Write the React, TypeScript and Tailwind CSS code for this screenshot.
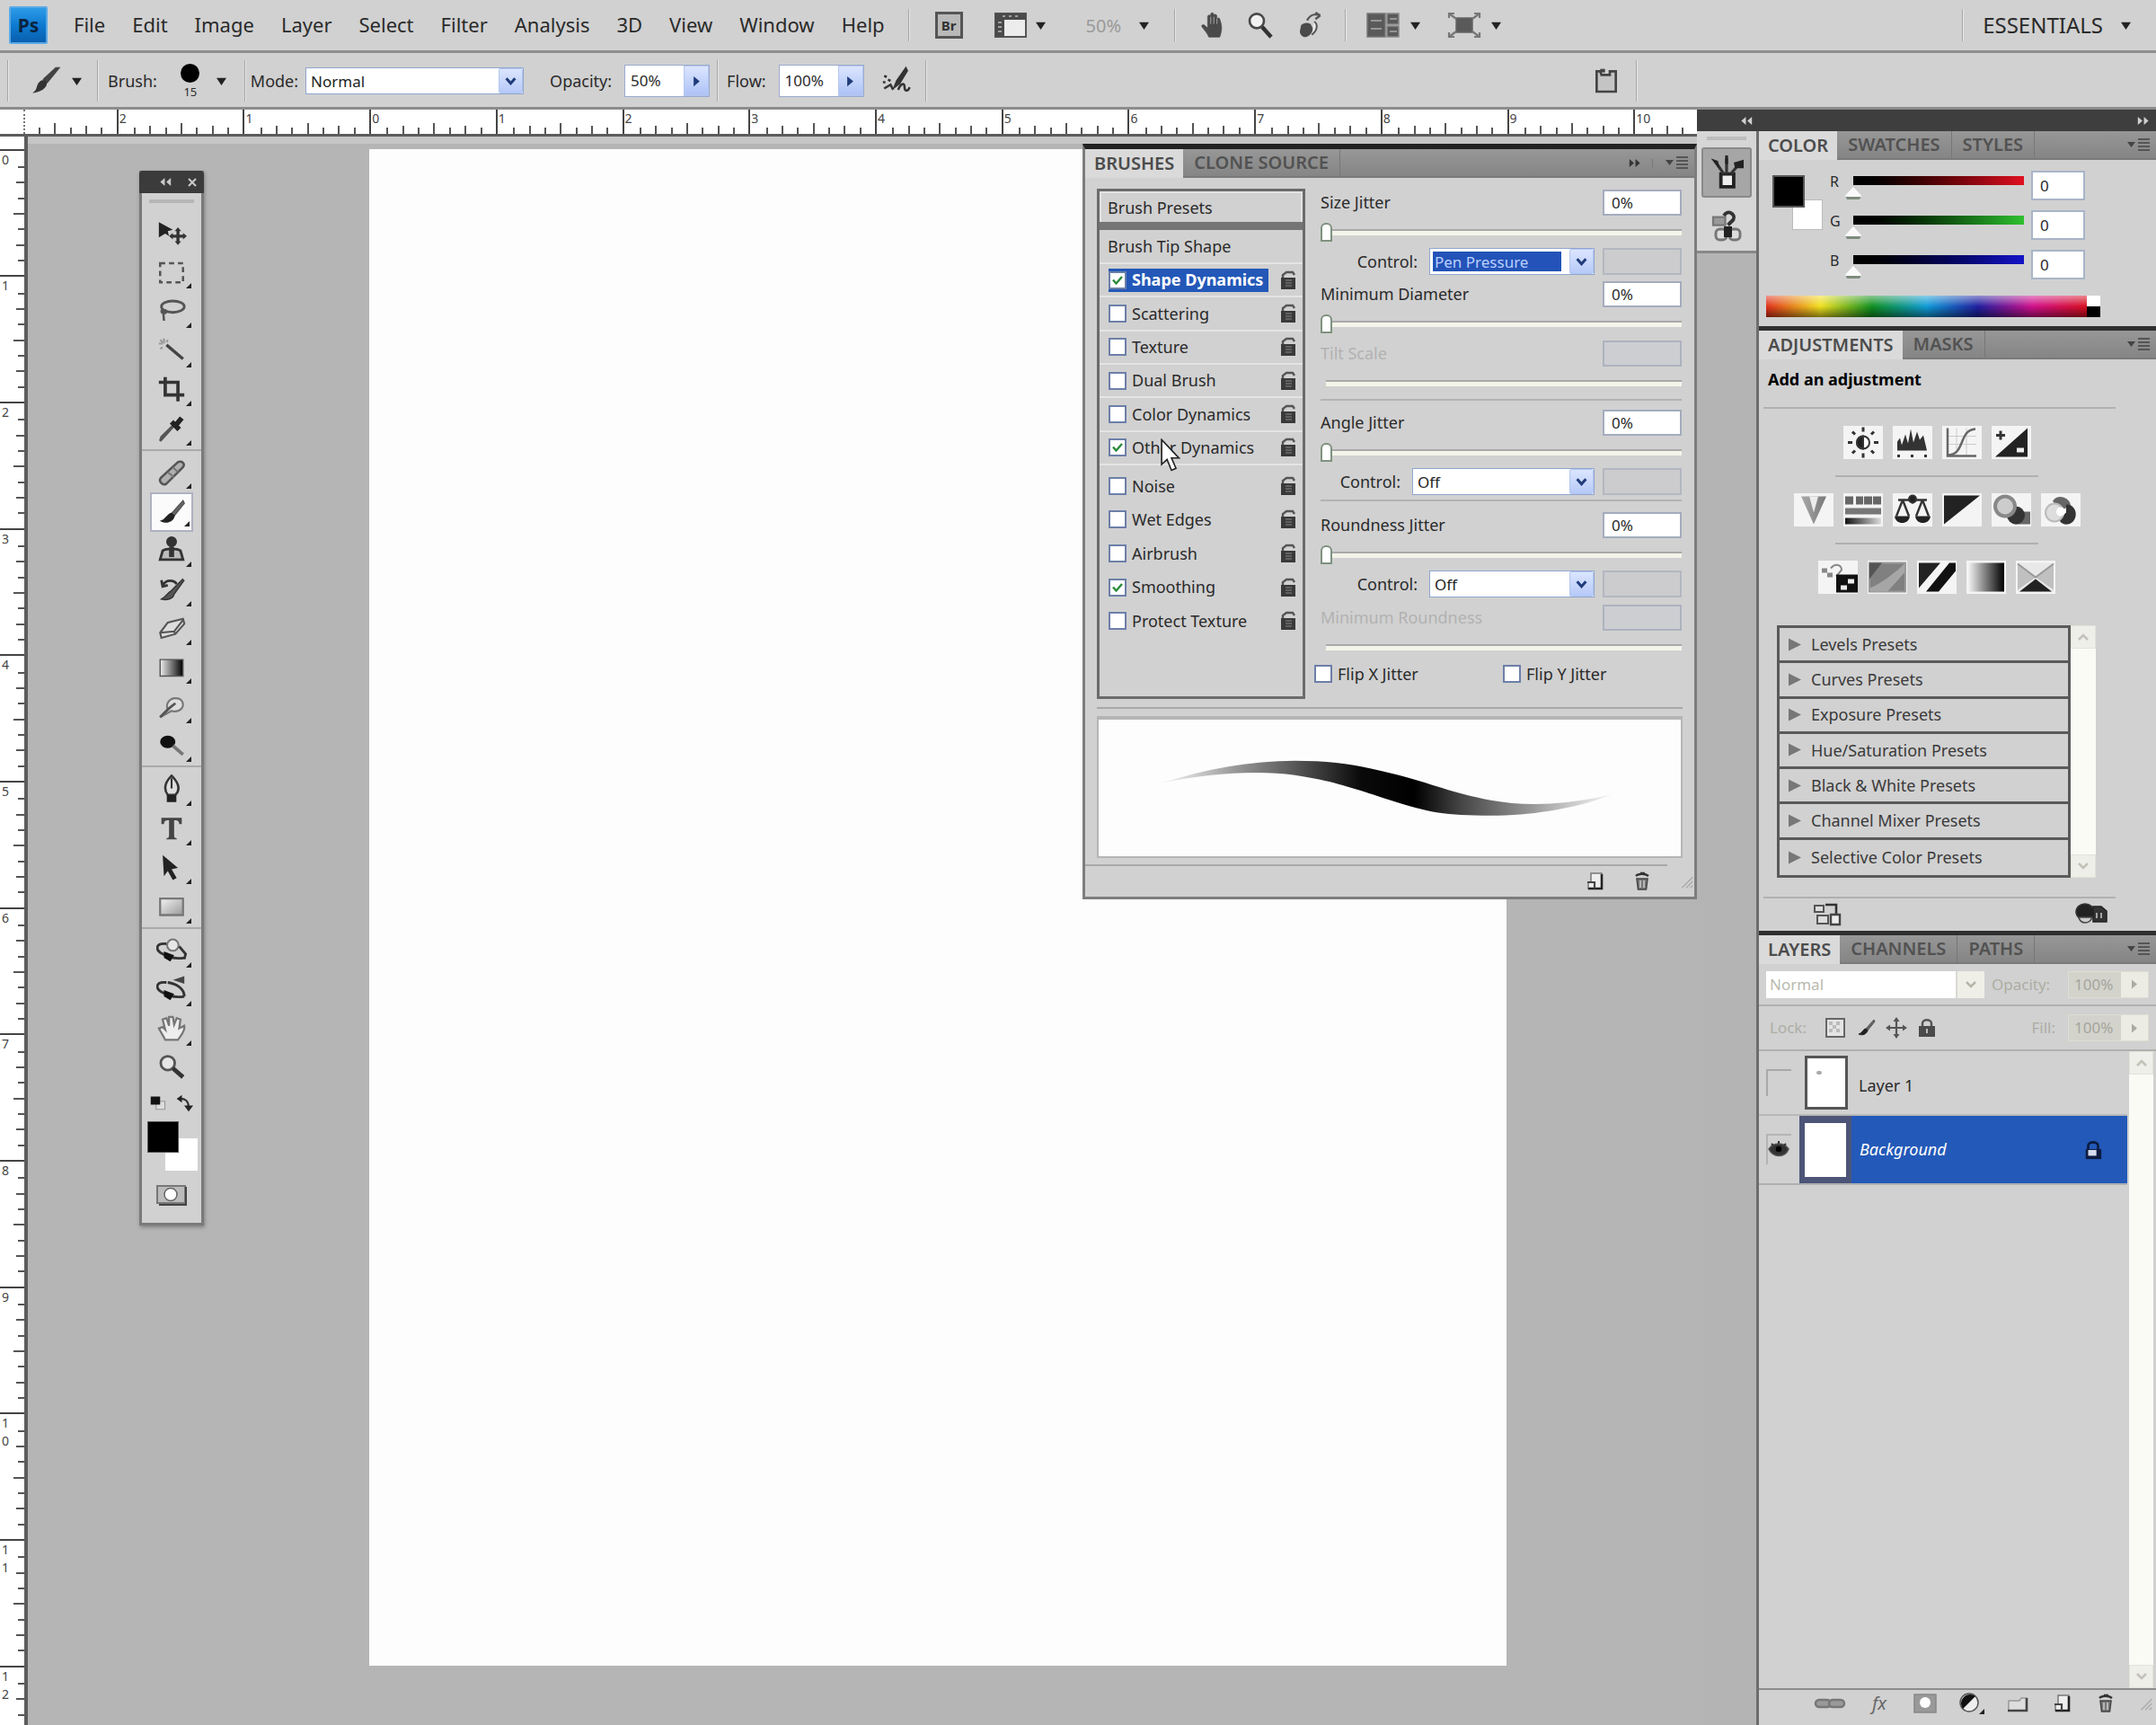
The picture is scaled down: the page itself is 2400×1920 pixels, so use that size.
import React from 'react'

type Kids = { children: React.ReactNode }

const Svg = ({ children, c = 'w-8 h-8', vb = '0 0 24 24' }: Kids & { c?: string; vb?: string }) => (
  <svg viewBox={vb} className={c} fill="none" stroke="#333" strokeWidth="1.5" aria-hidden="true">
    {children}
  </svg>
)

const Caret = ({ c = 'text-[#222]' }: { c?: string }) => (
  <svg viewBox="0 0 10 10" className={`w-[11px] h-[11px] shrink-0 ${c}`} fill="currentColor" aria-hidden="true">
    <path d="M0 1.5h10L5 9z" />
  </svg>
)

/* ---------- menu bar ---------- */

const menus = ['File', 'Edit', 'Image', 'Layer', 'Select', 'Filter', 'Analysis', '3D', 'View', 'Window', 'Help']

const Sep = ({ c = 'h-9' }: { c?: string }) => (
  <span className={`w-[2px] shrink-0 bg-[#a6a6a6] border-r border-[#e8e8e8] ${c}`} />
)

function MenuBar() {
  return (
    <header className="flex h-[59px] shrink-0 items-center border-b-[3px] border-[#8e8e8e] bg-[#d1d1d1] pl-[10px] pr-[28px] text-[22px]">
      <div className="grid h-[42px] w-[43px] place-items-center rounded-[2px] border-2 border-[#5aa9e6] bg-linear-to-b from-[#2c9be8] via-[#0d7ad0] to-[#0a5fae] text-[21px] font-bold text-[#0b2440]">
        Ps
      </div>
      <nav className="ml-[29px] flex gap-[30px]">
        {menus.map((m) => (
          <button key={m}>{m}</button>
        ))}
      </nav>
      <div className="ml-[26px] flex items-center">
        <Sep />
        <button aria-label="Launch Bridge" className="ml-[28px] grid h-[30px] w-[31px] place-items-center border-[3px] border-[#555] bg-[#b9b9b9] text-[15px] font-bold leading-none text-[#333]">
          Br
        </button>
        <button aria-label="View extras" className="ml-[34px] flex items-center gap-[9px]">
          <Svg c="w-[38px] h-[32px]" vb="0 0 38 32">
            <path d="M2 3h34v26H2z" fill="#ececec" stroke="#555" strokeWidth="2" />
            <path d="M2 3h34v7H12v19H2z" fill="#4a4a4a" stroke="none" />
            <path d="M5 13h4M5 18h4M5 23h4M10 6h3M17 6h3M24 6h3" stroke="#bbb" />
          </Svg>
          <Caret />
        </button>
        <button aria-label="Zoom level" className="ml-[45px] flex items-center gap-[20px] text-[20px] text-[#9a9a9a]">
          50%
          <Caret />
        </button>
        <span className="ml-[28px] flex"><Sep /></span>
        <button aria-label="Hand" className="ml-[26px]">
          <Svg c="w-[32px] h-[32px]">
            <path d="M8 22c-1-3-4-6-6-9 0-1.500 1.500-2 3-.5l2 2V5c0-1.800 2.300-1.800 2.500 0V3c.2-1.800 2.400-1.800 2.600 0v1.200c.3-1.600 2.500-1.500 2.600.2V7c.4-1.400 2.400-1.300 2.500.3C19.300 13 19 17 17 22z" fill="#4a4a4a" stroke="#4a4a4a" strokeWidth=".5" />
            <path d="M9.600 5v6M12.200 5v6M14.800 6.500V11" stroke="#aaa" strokeWidth=".7" />
          </Svg>
        </button>
        <button aria-label="Zoom" className="ml-[20px]">
          <Svg c="w-[32px] h-[32px]">
            <circle cx="9" cy="8.500" r="6" fill="#f2f2f2" stroke="#4a4a4a" strokeWidth="2" />
            <path d="M13.500 13.500L21 22" stroke="#333" strokeWidth="3.400" />
          </Svg>
        </button>
        <button aria-label="Rotate view" className="ml-[24px]">
          <Svg c="w-[32px] h-[32px]">
            <path d="M4 12c2-2 5-2.500 8-1l2 4c-1 4-3 6-6 7-3 0-5-2-5-5z" fill="#4a4a4a" stroke="none" />
            <path d="M9 8c2-4 6-6 11-4M20 4l-4-2.500M20 4l-4 3" stroke="#555" strokeWidth="1.800" />
            <path d="M15 9c3 2 3 7-2 11" fill="#eee" stroke="#555" />
          </Svg>
        </button>
        <span className="ml-[22px] flex"><Sep /></span>
        <button aria-label="Arrange documents" className="ml-[22px] flex items-center gap-[11px]">
          <Svg c="w-[38px] h-[32px]" vb="0 0 38 32">
            <path d="M1 3h20v26H1z" fill="#5a5a5a" stroke="#777" />
            <path d="M23 3h13v12H23zM23 17h13v12H23z" fill="#5a5a5a" stroke="#888" />
            <path d="M5 11h12M5 20h12M26 9h8M26 23h8" stroke="#aaa" />
          </Svg>
          <Caret />
        </button>
        <button aria-label="Screen mode" className="ml-[30px] flex items-center gap-[11px]">
          <Svg c="w-[38px] h-[32px]" vb="0 0 38 32">
            <path d="M10 8h18v16H10z" fill="#5a5a5a" stroke="#666" />
            <path d="M2 3l8 6M36 3l-8 6M2 29l8-6M36 29l-8-6M2 8V3h6M30 3h6v5M2 24v5h6M36 24v5h-6" stroke="#777" strokeWidth="2.200" />
          </Svg>
          <Caret />
        </button>
      </div>
      <div className="ml-auto flex items-center">
        <Sep />
        <button className="ml-[21px] flex items-center gap-[20px] text-[24px]">
          ESSENTIALS
          <Caret />
        </button>
      </div>
    </header>
  )
}

/* ---------- shared form controls ---------- */

const Chevron = () => (
  <svg viewBox="0 0 12 10" className="w-[13px] h-[11px]" fill="none" stroke="#1f3b7a" strokeWidth="2.800" aria-hidden="true">
    <path d="M1.500 2L6 7l4.500-5" />
  </svg>
)

function Drop({ id, value, options, c, on }: { id: string; value: string; options: string[]; c: string; on?: boolean }) {
  return (
    <div className={`flex h-[30px] border border-[#8fa5cf] bg-white ${c}`}>
      <div className="grid w-full">
        <select
          id={id}
          defaultValue={value}
          className={`col-start-1 row-start-1 appearance-none text-[17px] leading-none outline-none ${
            on ? 'm-[3px] mr-[36px] bg-[#2353b8] pl-[2px] text-[#bcd0ff]' : 'bg-transparent pl-[5px] text-[#222]'
          }`}
        >
          {options.map((o) => (
            <option key={o}>{o}</option>
          ))}
        </select>
        <span className="pointer-events-none col-start-1 row-start-1 grid h-full w-[27px] place-items-center justify-self-end rounded-[2px] border border-[#b4c6f0] bg-linear-to-b from-[#dbe5ff] to-[#b6c9f7]">
          <Chevron />
        </span>
      </div>
    </div>
  )
}

const PctField = ({ id, value, c }: { id: string; value: string; c: string }) => (
  <div className={`flex h-[36px] items-stretch border border-[#9aaace] bg-white ${c}`}>
    <input id={id} defaultValue={value} className="w-0 min-w-0 flex-1 pl-[6px] text-[17px] outline-none" />
    <button aria-label={`Adjust ${id}`} className="grid w-[28px] place-items-center border border-[#b4c6f0] bg-linear-to-b from-[#dbe5ff] to-[#adc2f5]">
      <svg viewBox="0 0 8 10" className="h-[13px] w-[9px]" fill="#1f3b7a"><path d="M1 0l6 5-6 5z" /></svg>
    </button>
  </div>
)

function OptionsBar() {
  return (
    <section aria-label="Tool options" className="flex h-[63px] shrink-0 items-center border-b-[3px] border-[#8c8c8c] bg-[#d1d1d1] pt-[2px] text-[18px]">
      <Sep c="ml-[8px] h-[46px]" />
      <button aria-label="Brush tool preset" className="ml-[24px] flex items-center gap-[12px]">
        <Svg c="w-[34px] h-[34px]">
          <path d="M22 2L13 13l-2.500-2.200L20 2z" fill="#444" stroke="#444" />
          <path d="M10.500 11.500c2 .5 2.800 2 2 4-1.500 3.500-6 5.500-11 6 3-1.500 3-4 4-6.500 1-2.500 3-4 5-3.500z" fill="#333" stroke="none" />
        </Svg>
        <Caret />
      </button>
      <Sep c="ml-[17px] h-[46px]" />
      <button className="ml-[10px] flex items-center">
        Brush:
        <span className="ml-[22px] flex w-[30px] flex-col items-center gap-[4px]">
          <span className="h-[21px] w-[21px] rounded-full bg-black" />
          <span className="text-[13px] leading-none">15</span>
        </span>
        <span className="ml-[14px] flex"><Caret /></span>
      </button>
      <Sep c="ml-[20px] h-[46px]" />
      <label htmlFor="mode" className="ml-[5px]">Mode:</label>
      <Drop id="mode" value="Normal" options={['Normal', 'Multiply', 'Screen']} c="ml-[8px] w-[243px]" />
      <label htmlFor="Opacity" className="ml-[29px]">Opacity:</label>
      <PctField id="Opacity" value="50%" c="ml-[14px] w-[95px]" />
      <Sep c="ml-[8px] h-[46px]" />
      <label htmlFor="Flow" className="ml-[9px]">Flow:</label>
      <PctField id="Flow" value="100%" c="ml-[14px] w-[95px]" />
      <button aria-label="Airbrush" className="ml-[16px]">
        <Svg c="w-[38px] h-[34px]">
          <path d="M20 2l-7 10-2 5 4-3 6-10z" fill="#333" />
          <path d="M14 19c2-5 5-6 5-2s3 3 4 0M3 8l2 1M2 13h2M6 11l2 1M3 18l5-3 2 4" strokeWidth="1.800" />
        </Svg>
      </button>
      <Sep c="ml-[14px] h-[46px]" />
      <button aria-label="Toggle brushes panel" className="ml-[740px]">
        <Svg c="w-[32px] h-[34px]">
          <path d="M4 4h3l1 3h7V4h5v17H4z" fill="#c4c4c4" stroke="#444" strokeWidth="2" />
          <path d="M7 2h4v3H7z" fill="#444" stroke="none" />
        </Svg>
      </button>
      <Sep c="ml-[17px] h-[46px]" />
    </section>
  )
}

/* ---------- rulers ---------- */

const hNums = ['3', '2', '1', '0', '1', '2', '3', '4', '5', '6', '7', '8', '9', '10']
const vNums = ['1', '0', '1', '2', '3', '4', '5', '6', '7', '8', '9', '10', '11', '12', '13']
const hTicks = ['h-[7px]', 'h-[9px]', 'h-[7px]', 'h-[12px]', 'h-[7px]', 'h-[9px]', 'h-[7px]']
const vTicks = ['w-[7px]', 'w-[9px]', 'w-[7px]', 'w-[12px]', 'w-[7px]', 'w-[9px]', 'w-[7px]']

const HRuler = () => (
  <div className="flex h-[30px] shrink-0 overflow-hidden border-b-[3px] border-[#5c5c5c] bg-white">
    <div className="z-10 w-[28px] shrink-0 border-r-2 border-dotted border-[#777] bg-white" />
    <div className="ml-[-39px] grid w-[1970px] shrink-0 grid-cols-14">
      {hNums.map((n, i) => (
        <div key={i} className="grid grid-cols-8 items-end border-l-2 border-[#444]">
          <span className="self-start pl-px text-[14px] leading-[20px] text-[#444]">{n}</span>
          {hTicks.map((t, j) => (
            <span key={j} className={`border-l-2 border-[#555] ${t}`} />
          ))}
        </div>
      ))}
    </div>
  </div>
)

const VRuler = () => (
  <div className="w-[31px] shrink-0 overflow-hidden border-r-[4px] border-[#5c5c5c] bg-white">
    <div className="h-0">
      <div className="mt-[-127px] grid h-[2110px] grid-rows-15">
        {vNums.map((n, i) => (
          <div key={i} className="grid grid-rows-8 justify-items-end border-t-2 border-[#444]">
            <span className="flex h-0 flex-col items-center justify-self-start pl-[2px] text-[14px] leading-[20px] text-[#444]">
              {n.split('').map((d, k) => (
                <span key={k}>{d}</span>
              ))}
            </span>
            {vTicks.map((t, j) => (
              <span key={j} className={`border-t-2 border-[#555] ${t}`} />
            ))}
          </div>
        ))}
      </div>
    </div>
  </div>
)

/* ---------- toolbox ---------- */

const brushGlyph = (
  <>
    <path d="M21 3L12 13l2 2 8-10z" fill="#666" stroke="#555" strokeWidth="1" />
    <path d="M12 13c-3 0-4 5-8 6 4 2 9 0 10-4z" fill="#222" stroke="#222" strokeWidth="1" />
  </>
)

type Tool = [string, React.ReactNode, boolean?]

const groups: Tool[][] = [
  [
    ['Move', <><path d="M2 3l11 6-4 1 1 4-3-2-5 3z" fill="#222" stroke="none" /><path d="M17 9v10M12 14h10" strokeWidth="2.400" /><path d="M17 7l2.500 3h-5zM17 21l2.500-3h-5zM10 14l3-2.500v5zM24 14l-3-2.500v5z" fill="#333" stroke="none" /></>, false],
    ['Marquee', <path d="M3 5h18v15H3z" strokeDasharray="4 3" strokeWidth="1.800" stroke="#555" />],
    ['Lasso', <><ellipse cx="13" cy="8" rx="9" ry="4.500" stroke="#555" strokeWidth="2" /><path d="M5 10c-2 2 0 4 2 3s0-3-1-2c-1 2 0 5 0 8" strokeWidth="1.800" stroke="#555" /></>],
    ['Magic Wand', <><path d="M8 7l13 11" stroke="#444" strokeWidth="2.400" /><path d="M6 2v4M2 6h3M3 3l2 2M9 3L8 5M3 10l2-1" stroke="#999" /></>],
    ['Crop', <path d="M7 2v14h15M2 6h15v15" stroke="#333" strokeWidth="2.600" />],
    ['Eyedropper', <><path d="M14 9L4 20l-1 1 1-3 10-10" stroke="#555" strokeWidth="1.800" fill="#eee" /><path d="M12 6l6 6M15 9l5-6" stroke="#222" strokeWidth="4" /></>],
  ],
  [
    ['Healing Brush', <><path d="M4 15L17 3c3-1 6 1 4 4L8 20c-3 2-7-2-4-5z" fill="#b0b0b0" stroke="#555" strokeWidth="1.800" /><path d="M9 11l5 4M13 7l4 4" stroke="#777" /></>],
    ['Brush', brushGlyph],
    ['Clone Stamp', <><circle cx="12" cy="5" r="3.500" fill="#333" /><path d="M12 8v5M5 12c3-2 11-2 14 0l2 7H3z" fill="#bbb" strokeWidth="2" /><path d="M10 9h4v8h-4z" fill="#333" stroke="none" /></>],
    ['History Brush', <><path d="M21 3L11 13c-2 1-3 4-7 6 4 1 9 0 10-4l8-11" fill="#555" strokeWidth="1" /><path d="M5 8c3-5 9-4 11-1M4 4l1 5 4-1" strokeWidth="2" /></>],
    ['Eraser', <><path d="M3 15l6-8 12-3 1 4-7 8-11 3z" fill="#ddd" stroke="#555" /><path d="M3 15l11-1 7-9M14 14l1 2" stroke="#555" /></>],
    ['Gradient', <><defs><linearGradient id="tg"><stop offset="0" stopColor="#eee" /><stop offset="1" stopColor="#000" /></linearGradient></defs><path d="M3 5h18v13H3z" fill="url(#tg)" stroke="#555" strokeWidth="1" /></>],
    ['Smudge', <><path d="M3 20l6-6c-2-4 1-9 6-9 6 0 7 5 5 8-2 2-5 3-8 2z" fill="#ddd" stroke="#777" /><path d="M3 20l7-7 5-4" stroke="#555" strokeWidth="2" /></>],
    ['Burn', <><ellipse cx="9" cy="9" rx="6" ry="5" fill="#111" stroke="none" /><path d="M13 12l8 7" stroke="#777" strokeWidth="2.600" /></>],
  ],
  [
    ['Pen', <><path d="M12 1c-6 6-6 11-3 15h6c4-4 3-9-3-15z" fill="#ddd" strokeWidth="1.800" /><path d="M9 17h6v4H9z" fill="#222" stroke="#222" /><path d="M12 3v8" /></>],
    ['Type', <path d="M4 3h16v5h-2c0-2-1-3-3-3h-1v12c0 1.500.5 2 2 2v1H8v-1c1.500 0 2-.5 2-2V5H9C7 5 6 6 6 8H4z" fill="#444" stroke="none" />],
    ['Path Selection', <path d="M5 2l12 10-5 1 4 7-3 1.500-4-7-3 4z" fill="#222" stroke="none" />],
    ['Rectangle', <><defs><linearGradient id="rg" x2="1" y2="1"><stop offset="0" stopColor="#f4f4f4" /><stop offset="1" stopColor="#999" /></linearGradient></defs><path d="M3 5h18v13H3z" fill="url(#rg)" stroke="#777" strokeWidth="1.600" /></>],
  ],
  [
    ['3D Rotate', <><circle cx="13" cy="7" r="4.500" fill="#e6e6e6" stroke="#777" /><path d="M8 6C-1 5-1 11 5 14c5 3 11 4 17 3M18 8l5 6-1 4" strokeWidth="2" /><path d="M6 12l8 3-3 5-5-3z" fill="#111" stroke="none" /></>],
    ['3D Orbit', <><path d="M13 4l9-3v6z" fill="#444" stroke="none" /><path d="M8 6C-1 5-1 11 5 14c5 3 11 4 17 3M9 6c7 1 13 5 13 11" strokeWidth="2" /><path d="M6 12l8 3-3 5-5-3z" fill="#111" stroke="none" /></>],
    ['Hand', <path d="M7 20C5 16 3 13 2 11l3-1 2 2-2-8 3-1 2 6V2h3l1 6 2-5 3 1-1 7 4-2c1 4-3 8-5 11z" fill="#eee" stroke="#777" strokeWidth="1.600" />],
    ['Zoom', <><circle cx="9" cy="8" r="5.500" fill="#e6e6e6" stroke="#555" strokeWidth="2" /><path d="M13 12l8 7" stroke="#333" strokeWidth="3.400" /></>, false],
  ],
]

const groupRows = ['grid-rows-6 h-[262px]', 'grid-rows-8 h-[347px]', 'grid-rows-4 h-[175px]', 'grid-rows-4 h-[174px]']

function Toolbox() {
  return (
    <aside aria-label="Tools" className="absolute left-[155px] top-[68px] w-[72px] border-[3px] border-[#7a7a7a] bg-[#d1d1d1] shadow-[1px_2px_4px_rgba(0,0,0,0.3)]">
      <div className="-mx-[3px] -mt-[3px] flex h-[25px] items-center justify-end gap-[18px] rounded-t-[4px] bg-[#3b3b3b] pr-[8px] text-[#c9c9c9]">
        <Arrows c="text-[#c9c9c9]" flip />
        <svg viewBox="0 0 10 10" className="h-[10px] w-[10px]" stroke="currentColor" strokeWidth="2"><path d="M1 1l8 8M9 1L1 9" /></svg>
      </div>
      <div className="mx-[8px] mt-[7px] h-[4px] bg-[#b6b6b6]" />
      <div className="mt-[12px]">
        {groups.map((g, gi) => (
          <div key={gi} className={gi ? 'border-t-2 border-[#aaa] pt-[3px]' : ''}>
            <div className={`grid ${groupRows[gi]}`}>
              {g.map(([name, art, more = true]) => (
                <button
                  key={name}
                  aria-label={name}
                  className={`relative mx-auto grid w-[48px] place-items-center ${name === 'Brush' ? 'border-2 border-[#aeb2c0] bg-[#fbfbfb]' : ''}`}
                >
                  <Svg c="w-[34px] h-[34px]">{art}</Svg>
                  {more && (
                    <svg viewBox="0 0 6 6" className="absolute bottom-[4px] right-[2px] h-[6px] w-[6px]" fill="#222"><path d="M6 0v6H0z" /></svg>
                  )}
                </button>
              ))}
            </div>
          </div>
        ))}
      </div>
      <div className="flex h-[34px] items-center justify-between px-[8px]">
        <button aria-label="Default colors">
          <Svg c="w-[20px] h-[18px]"><path d="M9 9h13v12H9z" fill="#ddd" stroke="#999" /><path d="M1 2h14v12H1z" fill="#111" stroke="none" /></Svg>
        </button>
        <button aria-label="Switch colors">
          <Svg c="w-[22px] h-[20px]"><path d="M5 6c8-1 13 3 13 11" strokeWidth="2.500" /><path d="M9 1v10L2 6zM12 15h12l-6 8z" fill="#222" stroke="none" /></Svg>
        </button>
      </div>
      <div className="relative h-[60px]">
        <button aria-label="Background color" className="absolute left-[26px] top-[22px] h-[36px] w-[36px] bg-white" />
        <button aria-label="Foreground color" className="absolute left-[6px] top-[3px] h-[35px] w-[35px] border border-[#555] bg-black" />
      </div>
      <button aria-label="Quick mask" className="mx-auto mb-[12px] mt-[6px] grid h-[38px] w-[40px] place-items-center">
        <Svg c="w-[36px] h-[24px]" vb="0 0 36 24"><path d="M2 2h31v19H2z" fill="#bbb" stroke="#777" strokeWidth="2" /><circle cx="17" cy="11.500" r="7" fill="#fff" stroke="#666" strokeWidth="1.500" /><path d="M34 3v20H4" stroke="#444" strokeWidth="2" /></Svg>
      </button>
    </aside>
  )
}

/* ---------- panel chrome ---------- */

function Arrows({ c, flip }: { c: string; flip?: boolean }) {
  return (
    <svg viewBox="0 0 12 8" className={`h-[9px] w-[14px] ${c}`} fill="currentColor" aria-hidden="true">
      {flip ? <path d="M5.500 0v8L1 4zM11.500 0v8L7 4z" /> : <path d="M.5 0v8L5 4zM6.500 0v8L11 4z" />}
    </svg>
  )
}

function Tabs({ active, rest, collapse }: { active: string; rest: string[]; collapse?: boolean }) {
  return (
    <div role="tablist" className="flex h-[32px] items-stretch border-b-2 border-[#7a7a7a] bg-linear-to-b from-[#979797] to-[#858585] text-[20px] font-semibold">
      <button role="tab" aria-selected="true" className="-mb-[2px] bg-[#dadada] px-[10px] leading-[30px] text-[#4c4c4c]">{active}</button>
      {rest.map((t) => (
        <button role="tab" aria-selected="false" key={t} className="border-r border-[#777] px-[12px] leading-[30px] text-[#525252]">{t}</button>
      ))}
      <div className="ml-auto flex items-center gap-[14px] pr-[6px]">
        {collapse && (
          <button aria-label="Collapse panel" className="border-r border-[#777] pr-[12px]"><Arrows c="text-[#333]" /></button>
        )}
        <button aria-label={`${active} panel menu`}>
          <Svg c="w-[26px] h-[16px]" vb="0 0 26 16"><path d="M0 5h9l-4.500 6z" fill="#444" stroke="none" /><path d="M12 2h13M12 6h13M12 10h13M12 14h13" stroke="#555" strokeWidth="1.800" /></Svg>
        </button>
      </div>
    </div>
  )
}

/* ---------- brushes panel ---------- */

function Check({ id, label, on, bold }: { id: string; label: string; on?: boolean; bold?: boolean }) {
  return (
    <span className={`flex items-center ${bold ? 'h-[26px] bg-[#2358b8] pr-[6px] font-bold text-white' : ''}`}>
      <span className="grid">
        <input id={id} type="checkbox" defaultChecked={on} className="peer col-start-1 row-start-1 h-[20px] w-[20px] appearance-none border-2 border-[#6c7fa8] bg-white" />
        <svg viewBox="0 0 12 12" className="pointer-events-none col-start-1 row-start-1 m-[4px] h-[12px] w-[12px] opacity-0 peer-checked:opacity-100" fill="none" stroke="#2a8a3a" strokeWidth="2.400">
          <path d="M1 5.500l3.500 4L11 2" />
        </svg>
      </span>
      <label htmlFor={id} className="pl-[6px]">{label}</label>
    </span>
  )
}

const LockIcon = () => (
  <Svg c="w-[19px] h-[22px]" vb="0 0 19 22">
    <path d="M3 10V5l4-3h7l2 3" stroke="#555" strokeWidth="2.400" />
    <path d="M1 8h16v13H1z" fill="#3a3a3a" stroke="none" />
    <path d="M6 11h7M6 14h7M6 17h7" stroke="#888" strokeWidth="1.200" />
  </Svg>
)

const dyn: [string, boolean?][] = [['Shape Dynamics', true], ['Scattering'], ['Texture'], ['Dual Brush'], ['Color Dynamics'], ['Other Dynamics', true]]
const flags: [string, boolean?][] = [['Noise'], ['Wet Edges'], ['Airbrush'], ['Smoothing', true], ['Protect Texture']]

const OptRow = ({ name, on, line }: { name: string; on?: boolean; line?: boolean }) => (
  <li className={`flex items-center justify-between pl-[10px] pr-[6px] ${line ? 'border-b-2 border-[#e4e4e4]' : ''}`}>
    <Check id={name} label={name} on={on} bold={name === 'Shape Dynamics'} />
    <button aria-label={`Lock ${name}`}><LockIcon /></button>
  </li>
)

const track =
  'h-[26px] w-full appearance-none bg-transparent [&::-webkit-slider-runnable-track]:h-[7px] [&::-webkit-slider-runnable-track]:border-t-2 [&::-webkit-slider-runnable-track]:border-[#a9a9a9] [&::-webkit-slider-runnable-track]:bg-[#f4f4ea] [&::-webkit-slider-thumb]:appearance-none'
const thumbOn =
  '[&::-webkit-slider-thumb]:-mt-[9px] [&::-webkit-slider-thumb]:h-[21px] [&::-webkit-slider-thumb]:w-[13px] [&::-webkit-slider-thumb]:rounded-t-[6px] [&::-webkit-slider-thumb]:border-2 [&::-webkit-slider-thumb]:border-[#7f917f] [&::-webkit-slider-thumb]:bg-white'
const thumbOff = '[&::-webkit-slider-thumb]:h-0 [&::-webkit-slider-thumb]:w-0 pl-[6px]'

function Param({ name, off }: { name: string; off?: boolean }) {
  return (
    <div>
      <div className="flex h-[30px] items-center justify-between">
        <label htmlFor={name} className={off ? 'text-[#b2b2b2]' : ''}>{name}</label>
        <input
          id={name}
          disabled={off}
          defaultValue={off ? '' : '0%'}
          className={`h-[29px] w-[88px] border-2 pl-[8px] text-[17px] ${off ? 'border-[#adb2be] bg-[#ccced2]' : 'border-[#a4acbd] bg-white'}`}
        />
      </div>
      <div className="flex h-[36px] items-center">
        <input type="range" min="0" max="100" defaultValue="0" disabled={off} aria-label={`${name} slider`} className={`${track} ${off ? thumbOff : thumbOn}`} />
      </div>
    </div>
  )
}

const Control = ({ id, value, w, on }: { id: string; value: string; w: string; on?: boolean }) => (
  <div className="flex h-[30px] items-center justify-end">
    <label htmlFor={id}>Control:</label>
    <Drop id={id} value={value} options={['Off', 'Fade', 'Pen Pressure', 'Pen Tilt']} c={`ml-[13px] mr-[9px] ${w}`} on={on} />
    <input aria-label={`${id} steps`} disabled className="h-[30px] w-[88px] border-2 border-[#b3b7c0] bg-[#cccccf]" />
  </div>
)

const NewIcon = ({ c = 'w-[24px] h-[24px]' }: { c?: string }) => (
  <Svg c={c}><path d="M8 3h12v17H5v-7h3z" fill="#eee" stroke="#777" /><path d="M20 4v16H5" stroke="#222" strokeWidth="2.600" /><path d="M4 13h8v7" stroke="#444" strokeWidth="2.200" /></Svg>
)
const TrashIcon = ({ c = 'w-[24px] h-[24px]' }: { c?: string }) => (
  <Svg c={c}><path d="M5 6c3-3 10-3 14 0M10 3h5" strokeWidth="2.400" /><path d="M6 9h12l-1.500 12h-9z" fill="#777" stroke="#444" /><path d="M10 11v8M14 11v8" stroke="#ccc" /></Svg>
)
const Grip = () => (
  <Svg c="w-[16px] h-[16px]"><path d="M23 5L5 23M23 12L12 23M23 19l-4 4" stroke="#aaa" strokeWidth="2" /></Svg>
)

function BrushesPanel() {
  return (
    <section aria-label="Brushes" className="absolute right-0 top-[38px] flex h-[841px] w-[684px] flex-col border-[3px] border-t-[6px] border-[#7d7d7d] border-t-[#222] bg-[#d1d1d1] text-[18px]">
      <Tabs active="BRUSHES" rest={['CLONE SOURCE']} collapse />
      <div className="flex pl-[13px] pr-[14px] pt-[12px]">
        <div className="flex h-[568px] w-[232px] shrink-0 flex-col border-[3px] border-[#6b6b6b]">
          <button className="h-[34px] border-2 border-[#e2e2e2] border-b-0 pl-[7px] text-left">Brush Presets</button>
          <div className="h-[9px] bg-[#757575]" />
          <button className="h-[38px] border-b-2 border-[#e4e4e4] pl-[9px] text-left">Brush Tip Shape</button>
          <ul className="grid h-[224px] grid-rows-6">
            {dyn.map(([n, on]) => <OptRow key={n} name={n} on={on} line />)}
          </ul>
          <ul className="mt-[4px] grid h-[188px] grid-rows-5">
            {flags.map(([n, on]) => <OptRow key={n} name={n} on={on} />)}
          </ul>
        </div>
        <div className="min-w-0 flex-1">
          <div className="pl-[17px]">
            <Param name="Size Jitter" />
            <Control id="Size control" value="Pen Pressure" w="w-[184px]" on />
            <div className="mt-[6px]"><Param name="Minimum Diameter" /></div>
            <Param name="Tilt Scale" off />
            <hr className="mb-[9px] border-t-2 border-[#b2b2b2]" />
            <Param name="Angle Jitter" />
            <Control id="Angle control" value="Off" w="w-[203px]" />
            <hr className="mb-[11px] mt-[5px] border-t-2 border-[#b2b2b2]" />
            <Param name="Roundness Jitter" />
            <Control id="Roundness control" value="Off" w="w-[184px]" />
            <div className="mt-[7px]"><Param name="Minimum Roundness" off /></div>
          </div>
          <div className="flex h-[24px] items-center pl-[10px]">
            <div className="w-[210px]"><Check id="flipx" label="Flip X Jitter" /></div>
            <Check id="flipy" label="Flip Y Jitter" />
          </div>
        </div>
      </div>
      <div className="mx-[13px] mt-[9px] h-[2px] bg-[#a8a8a8]" />
      <div className="mx-[13px] mt-[8px] border-2 border-t-4 border-[#b5b5b5] bg-[#fdfdfd]">
        <svg viewBox="0 0 650 152" className="block w-full" role="img" aria-label="Brush stroke preview">
          <defs>
            <linearGradient id="stroke" gradientUnits="userSpaceOnUse" x1="70" x2="575" y1="0" y2="0">
              <stop offset="0" stopColor="#aaa" stopOpacity=".1" />
              <stop offset=".16" stopColor="#999" />
              <stop offset=".3" stopColor="#555" />
              <stop offset=".44" stopColor="#0a0a0a" />
              <stop offset=".56" stopColor="#000" />
              <stop offset=".66" stopColor="#444" />
              <stop offset=".82" stopColor="#999" />
              <stop offset="1" stopColor="#aaa" stopOpacity=".1" />
            </linearGradient>
          </defs>
          <path d="M70 71C120 55 170 46 219 46S300 53 335 62S395 82 438 90S530 94 574 83C540 97 490 107 438 107S370 104 326 90S260 68 219 62S120 60 70 71Z" fill="url(#stroke)" />
        </svg>
      </div>
      <div className="mr-[30px] mt-[7px] h-[2px] bg-[#a8a8a8]" />
      <footer className="flex flex-1 items-center justify-end gap-[29px] pr-[1px]">
        <button aria-label="New brush"><NewIcon /></button>
        <button aria-label="Delete brush"><TrashIcon /></button>
        <Grip />
      </footer>
      <svg viewBox="0 0 20 34" className="pointer-events-none absolute left-[84px] top-[322px] h-[38px] w-[22px]" aria-hidden="true">
        <path d="M1 1v25l5.500-5 4.500 11 4.500-2-4.500-10.500h7.500z" fill="#fff" stroke="#222" strokeWidth="1.500" />
      </svg>
    </section>
  )
}

/* ---------- dock ---------- */

const channels = [
  ['R', 'to-[#e01020]'],
  ['G', 'to-[#2fc030]'],
  ['B', 'to-[#1414c8]'],
]

function ColorPanel() {
  return (
    <section aria-label="Color">
      <Tabs active="COLOR" rest={['SWATCHES', 'STYLES']} />
      <div className="flex h-[150px] pt-[12px]">
        <div className="relative ml-[13px] h-[66px] w-[62px] shrink-0">
          <button aria-label="Set background" className="absolute bottom-0 right-[4px] h-[34px] w-[34px] border border-[#bbb] bg-white" />
          <button aria-label="Set foreground" className="absolute left-[2px] top-[5px] h-[36px] w-[36px] border-2 border-[#555] bg-black" />
        </div>
        <div className="ml-[4px] flex flex-col">
          {channels.map(([n, to]) => (
            <div key={n} className="flex h-[44px] items-start">
              <label htmlFor={`ch${n}`} className="w-[26px] text-[16px] leading-[24px]">{n}</label>
              <div className="flex w-[190px] flex-col pt-[6px]">
                <div className={`h-[10px] bg-linear-to-r from-black ${to}`} />
                <input
                  type="range" min="0" max="255" defaultValue="0" aria-label={`${n} slider`}
                  className="-ml-[9px] h-[18px] w-[208px] appearance-none bg-transparent [&::-webkit-slider-thumb]:h-[14px] [&::-webkit-slider-thumb]:w-[18px] [&::-webkit-slider-thumb]:appearance-none [&::-webkit-slider-thumb]:bg-[#fafafa] [&::-webkit-slider-thumb]:border-b-[3px] [&::-webkit-slider-thumb]:border-[#7d8b7d] [&::-webkit-slider-thumb]:[clip-path:polygon(50%_0,100%_70%,90%_100%,10%_100%,0_70%)]"
                />
              </div>
              <input id={`ch${n}`} defaultValue="0" className="ml-[8px] h-[33px] w-[60px] border-2 border-[#a9b4c8] bg-white pl-[8px] text-[17px]" />
            </div>
          ))}
        </div>
      </div>
      <div className="mb-[10px] ml-[8px] mt-px flex h-[24px] w-[372px]">
        <div className="flex-1 bg-[linear-gradient(to_right,#e0301c,#f0e020_17%,#109020_33%,#109cd8_50%,#2020a0_66%,#d0108c_83%,#d81020)]">
          <div className="h-full bg-linear-to-b from-white/50 via-transparent to-black/50" />
        </div>
        <div className="grid w-[15px] grid-rows-2"><span className="bg-white" /><span className="bg-black" /></div>
      </div>
    </section>
  )
}

const Tile = ({ name, children }: Kids & { name: string }) => (
  <button aria-label={name} className="bg-[#f4f4f4]">
    <svg viewBox="0 0 44 36" className="h-[37px] w-[44px]" fill="none" stroke="#333" strokeWidth="2">{children}</svg>
  </button>
)

const Grad = ({ id, a, b }: { id: string; a: string; b: string }) => (
  <defs><linearGradient id={id}><stop offset="0" stopColor={a} /><stop offset="1" stopColor={b} /></linearGradient></defs>
)

const presets = ['Levels Presets', 'Curves Presets', 'Exposure Presets', 'Hue/Saturation Presets', 'Black & White Presets', 'Channel Mixer Presets', 'Selective Color Presets']

function ScrollBar({ c }: { c: string }) {
  return (
    <div className={`flex flex-col justify-between bg-[#fbfbf5] ${c}`}>
      <button aria-label="Scroll up" className="grid h-[26px] place-items-center border border-[#e2e2da] bg-[#efefe9]">
        <svg viewBox="0 0 12 8" className="h-[8px] w-[12px]" fill="none" stroke="#c2c2b8" strokeWidth="2.500"><path d="M1 7l5-5 5 5" /></svg>
      </button>
      <button aria-label="Scroll down" className="grid h-[26px] place-items-center border border-[#e2e2da] bg-[#efefe9]">
        <svg viewBox="0 0 12 8" className="h-[8px] w-[12px]" fill="none" stroke="#c2c2b8" strokeWidth="2.500"><path d="M1 1l5 5 5-5" /></svg>
      </button>
    </div>
  )
}

function AdjustmentsPanel() {
  return (
    <section aria-label="Adjustments" className="border-t-[5px] border-[#2f2f2f]">
      <Tabs active="ADJUSTMENTS" rest={['MASKS']} />
      <h2 className="ml-[10px] mt-[9px] text-[18px] font-bold leading-[26px] text-black">Add an adjustment</h2>
      <div className="mr-[45px] ml-[5px] mt-[18px] h-[2px] bg-[#b0b0b0]" />
      <div className="ml-[38px] flex w-[320px] flex-col items-center">
        <div className="mt-[19px] flex gap-[11px]">
          <Tile name="Brightness/Contrast">
            <circle cx="22" cy="18" r="7" fill="#fff" /><path d="M22 11a7 7 0 000 14z" fill="#222" />
            <path d="M22 1v5M22 30v5M5 18h5M34 18h5M10 6l3 3M34 6l-3 3M10 30l3-3M34 30l-3-3" strokeWidth="3" />
          </Tile>
          <Tile name="Levels">
            <path d="M5 27V17l3-4 2 8 4-12 3 10 3-16 3 15 4-12 3 9 4-5 4 17z" fill="#333" stroke="none" /><path d="M5 33h3M20 33h3M35 33h3" strokeWidth="3" />
          </Tile>
          <Tile name="Curves">
            <path d="M6 11h32M6 20h32M16 2v30M27 2v30" stroke="#ccc" strokeWidth="1" /><path d="M6 2v31h32M6 32c20 0 12-28 31-29" stroke="#666" strokeWidth="2.500" />
          </Tile>
          <Tile name="Exposure">
            <path d="M4 34L40 2v32z" fill="#222" stroke="none" /><path d="M10 5v10M5 10h10" strokeWidth="3" /><path d="M28 24h8v5h-8z" fill="#eee" stroke="none" />
          </Tile>
        </div>
        <div className="mt-[18px] h-[2px] w-[226px] bg-[#b0b0b0]" />
        <div className="mt-[18px] flex gap-[11px]">
          <Tile name="Vibrance"><Grad id="vg" a="#aaa" b="#777" /><path d="M8 3h28L22 34z" fill="url(#vg)" stroke="none" /><path d="M17 3h10l-5 18z" fill="#ececec" stroke="none" /></Tile>
          <Tile name="Hue/Saturation">
            <Grad id="h1" a="#111" b="#ddd" /><path d="M2 3h9v9H2zM14 3h8v9h-8zM23 3h9v9h-9zM33 3h9v9h-9z" fill="#666" stroke="none" /><path d="M2 16h40v7H2z" fill="#777" stroke="none" /><path d="M2 27h40v7H2z" fill="url(#h1)" stroke="none" />
          </Tile>
          <Tile name="Color Balance">
            <path d="M6 7h32M22 2v9M11 7L4 25M11 7l7 18M33 7l-7 18M33 7l7 18" strokeWidth="2.400" /><circle cx="22" cy="6" r="4" fill="#222" /><path d="M2 25h17c-1 10-16 10-17 0zM25 25h17c-1 10-16 10-17 0z" fill="#222" stroke="none" />
          </Tile>
          <Tile name="Black & White"><path d="M2 2h40L2 34z" fill="#222" stroke="none" /></Tile>
          <Tile name="Photo Filter"><path d="M26 20h17v14H26z" fill="#666" stroke="none" /><circle cx="27" cy="24" r="10" fill="#333" stroke="none" /><circle cx="15" cy="14" r="11" fill="#ccc" stroke="#888" strokeWidth="4" /></Tile>
          <Tile name="Channel Mixer"><path d="M13 8a11 10 0 0120 6l-8 3-8-3z" fill="#666" stroke="none" /><path d="M28 12c14 0 14 20 2 22-6 1-10-3-10-7l8-6z" fill="#333" stroke="none" /><circle cx="15" cy="21" r="10" fill="#ddd" stroke="#bbb" /><circle cx="22" cy="20" r="5" fill="#fff" stroke="none" /></Tile>
        </div>
        <div className="mt-[18px] h-[2px] w-[226px] bg-[#b0b0b0]" />
        <div className="mt-[18px] flex gap-[11px]">
          <Tile name="Invert"><path d="M4 8h6v5H4zM10 13h6v5h-6z" fill="#888" stroke="none" /><path d="M14 8c5-6 12-4 12 2l-6 7" stroke="#888" /><path d="M20 15h24v20H20z" fill="#111" stroke="none" /><path d="M25 27h7v5h-7zM33 20h7v5h-7z" fill="#eee" stroke="none" /></Tile>
          <Tile name="Posterize"><path d="M2 2h40v32H2z" fill="#808080" stroke="#999" /><path d="M2 30C10 28 30 14 41 3v10L22 34H3z" fill="#a6a6a6" stroke="none" /><path d="M2 2h14L2 20z" fill="#555" stroke="none" /></Tile>
          <Tile name="Threshold"><path d="M2 2h24L2 30z" fill="#222" stroke="none" /><path d="M10 34L36 2h7v9L24 34z" fill="#111" stroke="none" /></Tile>
          <Tile name="Gradient Map"><Grad id="gm" a="#f4f4f4" b="#000" /><path d="M2 2h40v32H2z" fill="url(#gm)" stroke="none" /></Tile>
          <Tile name="Selective Color"><path d="M2 2h40v32H2z" fill="#e8e8e8" stroke="none" /><path d="M2 4l20 14L2 32zM42 4L22 18l20 14z" fill="#c0c0c0" stroke="none" /><path d="M4 34l18-14 18 14z" fill="#222" stroke="none" /><path d="M2 3l20 15L42 3" stroke="#999" /></Tile>
        </div>
      </div>
      <div className="ml-[20px] mt-[35px] flex h-[281px]">
        <ul className="grid w-[327px] grid-rows-7 divide-y-[3px] divide-[#5a5a5a] border-[3px] border-[#5a5a5a] text-[18px] text-[#3a3a3a]">
          {presets.map((p) => (
            <li key={p} className="flex">
              <button className="flex w-full items-center gap-[11px] pl-[10px]">
                <svg viewBox="0 0 14 14" className="h-[15px] w-[14px]" fill="#777"><path d="M0 0l14 7-14 7z" /></svg>
                {p}
              </button>
            </li>
          ))}
        </ul>
        <ScrollBar c="w-[28px]" />
      </div>
      <div className="mr-[45px] ml-[5px] mt-[21px] h-[2px] bg-[#b0b0b0]" />
      <footer className="flex h-[36px] items-center justify-between pl-[60px] pr-[52px]">
        <button aria-label="Expanded view">
          <Svg c="w-[34px] h-[28px]" vb="0 0 34 28"><path d="M2 4h10v7H2zM5 15h12v9H5z" fill="#ddd" stroke="#555" strokeWidth="2" /><path d="M14 3h12v12" strokeWidth="2.600" /><path d="M20 14h10v11H20z" fill="#eee" stroke="#444" strokeWidth="2.400" /></Svg>
        </button>
        <button aria-label="Clip to layer">
          <Svg c="w-[38px] h-[28px]" vb="0 0 38 28"><ellipse cx="11" cy="11" rx="10" ry="9" fill="#222" /><path d="M4 17c2 8 12 8 15 0z" fill="#ccc" stroke="#444" /><path d="M20 5h9l6 5v12H20z" fill="#333" stroke="#222" /><path d="M24 12v6M29 12v6" stroke="#ccc" /></Svg>
        </button>
      </footer>
    </section>
  )
}

const FadedStep = ({ id }: { id: string }) => (
  <div className="flex h-[30px] w-[90px] border border-[#deded4]">
    <input id={id} disabled defaultValue="100%" className="w-0 flex-1 bg-[#d3d3cc] pl-[6px] text-[17px] text-[#a5a59c]" />
    <button aria-label={`Adjust ${id}`} disabled className="grid w-[30px] place-items-center bg-[#ecece4]">
      <svg viewBox="0 0 8 10" className="h-[11px] w-[8px]" fill="#aaaaa0"><path d="M1 0l6 5-6 5z" /></svg>
    </button>
  </div>
)

function LayersPanel() {
  return (
    <section aria-label="Layers" className="flex flex-1 flex-col border-t-[5px] border-[#2f2f2f]">
      <Tabs active="LAYERS" rest={['CHANNELS', 'PATHS']} />
      <div className="flex h-[47px] items-center border-b-2 border-[#b0b0b0] pl-[8px] text-[17px] text-[#adada4]">
        <div className="grid h-[30px] w-[243px] bg-white">
          <select aria-label="Blend mode" disabled defaultValue="Normal" className="col-start-1 row-start-1 appearance-none bg-transparent pl-[4px] text-[17px] text-[#b9b9ae] opacity-100">
            <option>Normal</option>
          </select>
          <span className="pointer-events-none col-start-1 row-start-1 grid w-[32px] place-items-center justify-self-end border-l-2 border-[#d9d9d2] bg-[#efefe8]">
            <svg viewBox="0 0 12 8" className="h-[8px] w-[12px]" fill="none" stroke="#b5b5a8" strokeWidth="2.500"><path d="M1 1l5 5 5-5" /></svg>
          </span>
        </div>
        <label htmlFor="layer opacity" className="ml-[8px]">Opacity:</label>
        <span className="ml-auto mr-[8px]"><FadedStep id="layer opacity" /></span>
      </div>
      <div className="flex h-[50px] items-center border-b-2 border-[#b0b0b0] pl-[12px] text-[17px] text-[#adada4]">
        <span className="w-[61px]">Lock:</span>
        <div className="flex gap-[10px]">
          <button aria-label="Lock transparent pixels"><Svg c="w-[24px] h-[24px]"><path d="M2 2h20v20H2z" fill="#e4e4e4" stroke="#666" strokeWidth="2" /><path d="M5 5h4v4H5zM13 5h4v4h-4zM9 9h4v4H9zM5 13h4v4H5zM13 13h4v4h-4z" fill="#bbb" stroke="none" /></Svg></button>
          <button aria-label="Lock image pixels"><Svg c="w-[24px] h-[24px]">{brushGlyph}</Svg></button>
          <button aria-label="Lock position"><Svg c="w-[24px] h-[24px]"><path d="M12 2v20M2 12h20" stroke="#555" strokeWidth="2.200" /><path d="M12 0l3.500 5h-7zM12 24l3.500-5h-7zM0 12l5-3.500v7zM24 12l-5-3.500v7z" fill="#555" stroke="none" /></Svg></button>
          <button aria-label="Lock all"><Svg c="w-[24px] h-[24px]"><path d="M7 11V7c0-5 10-5 10 0v4" stroke="#555" strokeWidth="2.500" /><path d="M3 10h18v12H3z" fill="#4a4a4a" stroke="none" /><path d="M12 13v5" stroke="#bbb" strokeWidth="2" /></Svg></button>
        </div>
        <label htmlFor="layer fill" className="ml-auto mr-[14px]">Fill:</label>
        <span className="mr-[8px]"><FadedStep id="layer fill" /></span>
      </div>
      <div className="flex flex-1">
        <ul className="min-w-0 flex-1 text-[18px]">
          <li className="flex h-[72px] items-center border-b-2 border-[#b8b8b8]">
            <button aria-label="Show Layer 1" className="ml-[8px] h-[30px] w-[28px] border-l-2 border-t-2 border-[#a8a8a8]" />
            <span className="ml-[15px] flex h-[60px] w-[48px] border-[3px] border-[#555] bg-white pl-[10px] pt-[14px]">
              <span className="h-[4px] w-[6px] rounded-full bg-[#aaa]" />
            </span>
            <span className="ml-[12px] pt-[6px]">Layer 1</span>
          </li>
          <li className="flex h-[77px] items-stretch border-b-2 border-[#b0b0b0]">
            <button aria-label="Hide Background" className="ml-[8px] mr-[9px] mt-[20px] h-[34px] w-[28px] border-l-2 border-t-2 border-[#b4b4b4]">
              <Svg c="w-[24px] h-[26px]"><path d="M1 11c5-8 17-8 22 0-4 10-17 10-22 0z" fill="#333" stroke="#555" /><path d="M4 5l2 2M12 2v3M20 5l-2 2" strokeWidth="2" /><circle cx="12" cy="11" r="4" fill="#000" /></Svg>
            </button>
            <div className="flex flex-1 items-center bg-[#2359b8] text-white">
              <span className="grid h-full w-[58px] place-items-center bg-[#4c5578]"><span className="h-[60px] w-[46px] bg-white" /></span>
              <span className="ml-[9px] italic">Background</span>
              <span className="ml-auto mr-[27px] grid">
                <Svg c="w-[22px] h-[24px]"><path d="M6 12V7c0-6 12-6 12 0v5" stroke="#0d1c40" strokeWidth="3" /><path d="M3 11h19v12H3z" fill="#0d1c40" stroke="none" /><path d="M6 12h10v7H6z" fill="#d5dcee" stroke="none" /></Svg>
              </span>
            </div>
          </li>
        </ul>
        <ScrollBar c="ml-[2px] mr-[3px] w-[27px]" />
      </div>
      <footer className="flex h-[41px] shrink-0 items-center justify-end gap-[23px] border-t-2 border-[#8c8c8c] pb-[9px] pr-[4px]">
        <button aria-label="Link layers"><Svg c="w-[36px] h-[16px]" vb="0 0 36 16"><rect x="2" y="4" width="17" height="8" rx="4" fill="#999" stroke="#777" strokeWidth="2.500" /><rect x="17" y="4" width="17" height="8" rx="4" fill="#999" stroke="#777" strokeWidth="2.500" /></Svg></button>
        <button aria-label="Layer style" className="w-[28px] text-[20px] italic leading-none text-[#666]">fx</button>
        <button aria-label="Add mask"><Svg c="w-[28px] h-[24px]" vb="0 0 28 24"><path d="M2 2h24v20H2z" fill="#999" stroke="#888" /><circle cx="14" cy="11" r="6" fill="#fff" stroke="none" /></Svg></button>
        <button aria-label="New adjustment layer"><Svg c="w-[30px] h-[26px]" vb="0 0 30 26"><circle cx="12" cy="12" r="10" fill="#eee" stroke="#555" /><path d="M5 19A10 10 0 0119 5z" fill="#111" stroke="none" /><path d="M29 19v6h-6z" fill="#222" stroke="none" /></Svg></button>
        <button aria-label="New group"><Svg c="w-[26px] h-[24px]"><path d="M2 9h12l2-3h6v14H2z" fill="#ddd" stroke="#999" /><path d="M1 20h21V6" stroke="#444" strokeWidth="2.600" /></Svg></button>
        <button aria-label="New layer"><NewIcon c="w-[26px] h-[24px]" /></button>
        <button aria-label="Delete layer"><TrashIcon c="w-[26px] h-[24px]" /></button>
        <Grip />
      </footer>
    </section>
  )
}

function Dock() {
  return (
    <div className="flex w-[511px] shrink-0 flex-col">
      <div className="flex h-[24px] shrink-0 items-center bg-[#3e3e3e]">
        <button aria-label="Expand dock" className="w-[62px] pl-[48px]"><Arrows c="text-[#d0d0d0]" flip /></button>
        <button aria-label="Collapse dock" className="ml-auto mr-[7px]"><Arrows c="text-[#d0d0d0]" /></button>
      </div>
      <div className="flex flex-1">
        <div className="w-[66px] shrink-0 bg-[#b4b4b4]">
          <div className="flex h-[136px] flex-col items-center border-b-[3px] border-[#888] bg-[#d6d6d6] pt-[6px]">
            <div className="h-[4px] w-[44px] bg-[#bcbcbc]" />
            <button aria-label="Brushes" className="mt-[8px] grid h-[56px] w-[56px] place-items-center rounded-[3px] border-2 border-[#8a8a8a] bg-[#a6a6a6]">
              <Svg c="w-[38px] h-[38px]"><path d="M8 13h9v9H8z" fill="#eee" stroke="#222" strokeWidth="2.400" /><path d="M10 13L4 4M12 13V2M15 13l5-6" strokeWidth="2" /><path d="M1 2l5 2 1 6zM17 5l7-2v6h-6zM11 0h2v6h-2z" fill="#222" stroke="none" /></Svg>
            </button>
            <button aria-label="Clone Source" className="mt-[10px] grid h-[44px] w-[56px] place-items-center">
              <Svg c="w-[38px] h-[36px]"><path d="M2 5h9v6H2z" fill="#999" stroke="#777" /><path d="M10 4c3-5 9-1 7 3l-4 4" strokeWidth="2.600" /><rect x="4" y="14" width="8" height="8" rx="3" fill="#ddd" stroke="#777" strokeWidth="2" /><rect x="14" y="14" width="8" height="8" rx="3" fill="#ddd" stroke="#777" strokeWidth="2" /><path d="M10 12h6v8h-6z" fill="#222" stroke="none" /></Svg>
            </button>
          </div>
        </div>
        <div className="flex min-w-0 flex-1 flex-col border-l-[3px] border-[#6d6d6d] bg-[#d1d1d1]">
          <ColorPanel />
          <AdjustmentsPanel />
          <LayersPanel />
        </div>
      </div>
    </div>
  )
}

export default function App() {
  return (
    <div className="flex min-h-screen flex-col overflow-hidden bg-[#b5b5b5] font-['Noto_Sans','Open_Sans',sans-serif] leading-tight text-[#2a2a2a]">
      <MenuBar />
      <OptionsBar />
      <main className="flex flex-1">
        <div className="relative flex min-w-0 flex-1 flex-col overflow-hidden">
          <HRuler />
          <div className="flex flex-1">
            <VRuler />
            <div className="min-w-0 flex-1 border-t-[8px] border-[#c6c6c6] pl-[380px] pt-[6px]">
              <div className="h-[1688px] w-[1266px] bg-[#fdfdfd]" />
            </div>
          </div>
          <Toolbox />
          <BrushesPanel />
        </div>
        <Dock />
      </main>
    </div>
  )
}
